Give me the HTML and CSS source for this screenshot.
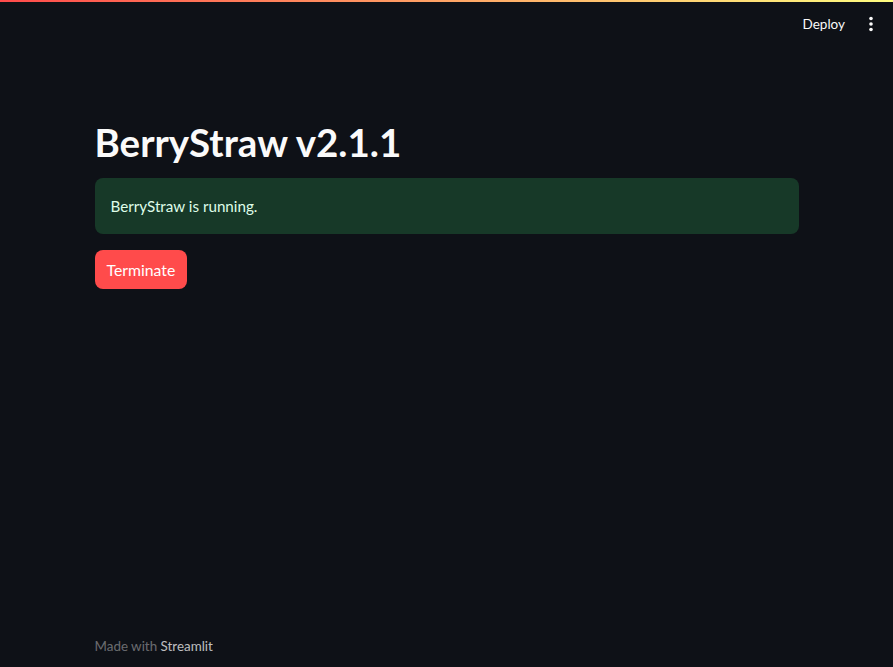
FILE: index.html
```html
<!DOCTYPE html>
<html>
<head>
<meta charset="utf-8">
<link rel="stylesheet" href="styles.css">
</head>
<body>
<div class="decoration"></div>
<header class="header">
  <span class="deploy">Deploy</span>
  <span class="menu">
    <svg width="4" height="16" viewBox="0 0 4 16"><circle cx="2" cy="2.5" r="1.8" fill="#fafafa"/><circle cx="2" cy="8" r="1.8" fill="#fafafa"/><circle cx="2" cy="13.5" r="1.8" fill="#fafafa"/></svg>
  </span>
</header>
<main class="main">
  <div class="block">
    <h1 class="title">BerryStraw v2.1.1</h1>
    <div class="alert">BerryStraw is running.</div>
    <button class="btn">Terminate</button>
  </div>
  <footer class="footer">Made with <span class="brand">Streamlit</span></footer>
</main>
</body>
</html>
```
FILE: styles.css
```css
html, body { margin: 0; padding: 0; height: 100%; }
body {
  background: #0e1117;
  color: #fafafa;
  font-family: Lato, "Noto Sans", sans-serif;
  display: flex;
  flex-direction: column;
}
.decoration {
  height: 2px;
  background: linear-gradient(90deg, #ff4b4b, #fffd80);
}
.header {
  height: 44px;
  display: flex;
  align-items: center;
  justify-content: flex-end;
  padding-right: 20px;
  gap: 24px;
}
.deploy { font-size: 13.5px; color: #fafafa; }
.menu { display: flex; align-items: center; }
.main {
  flex: 1;
  display: flex;
  flex-direction: column;
  width: 704px;
  margin: 0 auto;
}
.block { flex: 1; }
.title {
  margin: 72px 0 0;
  font-size: 38.5px;
  font-weight: 700;
  line-height: 48px;
}
.alert {
  margin-top: 12px;
  height: 56px;
  box-sizing: border-box;
  padding: 0 16px;
  display: flex;
  align-items: center;
  border-radius: 8px;
  background: #173928;
  color: #dffde9;
  font-size: 15.2px;
}
.btn {
  margin-top: 16px;
  height: 39px;
  padding: 0 12px;
  border: none;
  border-radius: 8px;
  background: #ff4b4b;
  color: #fff;
  font-family: inherit;
  font-size: 15.8px;
}
.footer {
  padding-bottom: 13px;
  font-size: 13.4px;
  color: rgba(250,250,250,0.4);
}
.brand { color: rgba(250,250,250,0.75); }
```
